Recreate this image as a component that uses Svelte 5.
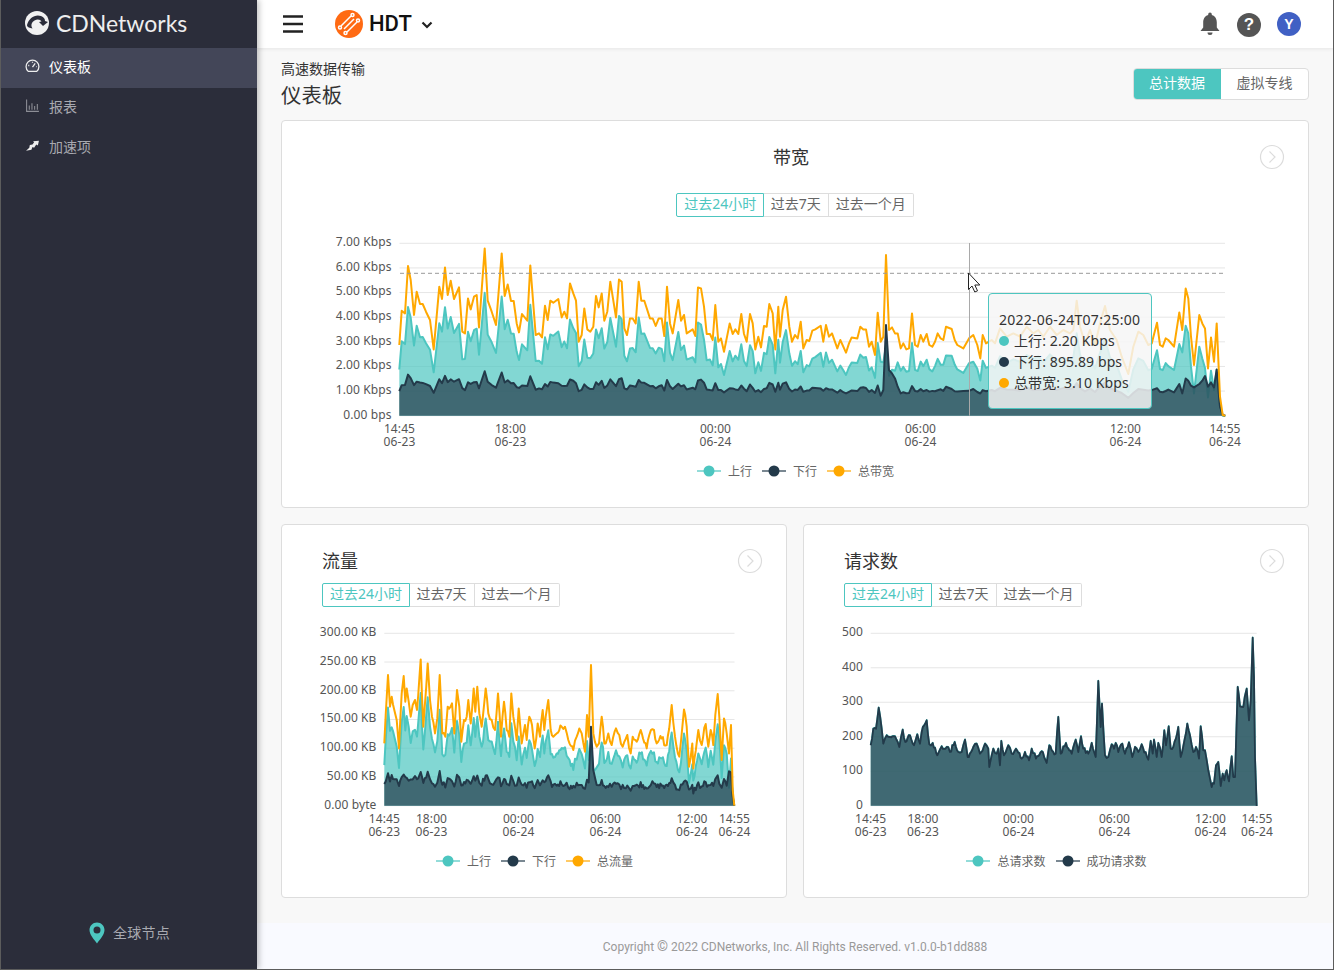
<script>
  let seed = 12345;
  const rnd = () => ((seed = (seed * 1103515245 + 12345) & 0x7fffffff) / 0x7fffffff);
  const pairs = (a) => { const o = []; for (let i = 0; i < a.length; i += 2) o.push([a[i], a[i + 1]]); return o; };
  const interp = (k, x) => {
    for (let i = 1; i < k.length; i++) if (x <= k[i][0]) {
      const t = (x - k[i - 1][0]) / (k[i][0] - k[i - 1][0]);
      return k[i - 1][1] + t * (k[i][1] - k[i - 1][1]);
    }
    return k[k.length - 1][1];
  };
  const inRange = (k, x) => k.length && x >= k[0][0] && x <= k[k.length - 1][0];
  const resample = (k, step, amp) => {
    const out = []; let last = k[0][0];
    k.forEach((p, i) => {
      if (i) {
        const n = Math.floor((p[0] - last) / step);
        for (let j = 1; j < n; j++) {
          const x = last + ((p[0] - last) * j) / n;
          out.push([x, interp(k, x) + (rnd() - 0.5) * amp]);
        }
      }
      out.push(p); last = p[0];
    });
    return out;
  };
  const d = (pts) => pts.map((p, i) => (i ? 'L' : 'M') + p[0].toFixed(1) + ' ' + p[1].toFixed(1)).join('');
  const area = (pts, base) => d(pts) + `L${pts[pts.length - 1][0].toFixed(1)} ${base}L${pts[0][0].toFixed(1)} ${base}Z`;

  const topA = pairs([208,345,215,242,225,250,234,108,242,150,252,255,260,185,270,222,278,222,288,245,300,270,311,358,328,170,336,207,345,112,353,195,362,152,372,207,387,172,397,305,405,310,414,205,422,238,432,200,440,195,447,292,464,55,473,212,485,245,498,285,515,70,524,198,533,163,543,213,551,213,560,280,567,307,576,252,592,272,601,106,617,315,627,310,636,322,645,227,653,270,661,212,670,218,685,207,695,262,703,245,711,265,720,160,730,190,738,212,746,335,755,315,763,235,772,298,781,305,790,290,798,198,806,232,815,190,823,272,832,245,841,155,858,262,867,148,875,155,883,295,891,315,900,265,908,265,917,280,926,155,934,212,943,212,960,265,968,265,977,288,986,265,995,265,1003,318,1011,170,1020,280,1028,310,1045,210,1053,272,1062,255,1070,310,1088,298,1096,318,1104,172,1113,175,1122,230,1130,312,1140,312,1148,330,1156,225,1165,335,1173,325,1182,365,1199,280,1208,312,1216,298,1225,312,1234,252,1242,312,1250,335,1260,252,1268,280,1276,358,1285,320,1293,352,1302,288,1310,290,1318,222,1328,250,1336,358,1345,230]);
  const topB = pairs([0,320,8,240,18,200,28,290,36,335,45,315,53,325,62,275,70,355,80,330,88,333,97,302,106,298,122,287,130,335,138,285,147,320,156,310,172,355,181,330,190,350,198,368,207,340,215,322,232,325,241,290,250,298,258,298,267,350,275,335,285,375,293,248,302,335,310,320,318,75,327,300,336,292,345,310,353,310,362,355,370,340,379,358,387,355,396,250,405,345,413,350,422,315,430,335,440,312,448,345,457,350,465,335,473,310,482,325,490,330,498,290,515,297,524,330,532,345,550,355,567,325,580,315,592,345,601,385,608,315,618,340,635,330,645,340,660,295,680,320,700,310,720,320,740,290,760,310,775,300,790,320,810,290,830,315,850,300,870,310,880,300,890,212,900,290,915,340,930,300,945,345,960,280,975,228,990,300,1010,330,1025,380,1045,432,1060,350,1075,305,1090,315,1105,345,1115,340,1131,278,1140,345,1148,350,1157,325,1165,330,1182,350,1198,247,1207,300,1217,175,1225,205,1233,320,1242,405,1258,255,1267,280,1275,295,1284,415,1293,322,1302,395,1310,280,1320,500,1328,555,1336,557]);
  const flowK = pairs([253,370,257,285,264,165,270,260,275,230,283,270,290,300,297,385,305,220,311,168,316,245,320,205,326,245,332,290,338,255,345,240,351,270,362,118,370,320,383,130,390,240,396,290,405,340,412,295,419,165,427,340,436,350,443,260,456,250,463,340,471,210,478,260,484,365,492,300,500,290,505,240,512,310,521,205,526,275,532,200,538,280,545,320,557,205,565,280,575,300,585,330,594,220,603,350,612,245,620,330,628,350,634,220,640,290,650,360,656,265,665,370,675,315,680,360,688,290,696,315,704,385,713,310,720,350,728,270,733,330,745,240,752,330,760,350,770,340,785,320,795,320,805,360,820,390,830,350,838,325,845,340,855,395,861,285,866,350,873,135,880,340,890,380,897,370,905,290,913,370,925,340,935,375,948,325,958,345,968,380,982,345,992,400,998,350,1010,365,1022,330,1040,385,1048,345,1062,330,1070,370,1085,355,1100,375,1115,255,1125,350,1138,410,1152,268,1160,320,1167,440,1177,370,1180,445,1195,330,1205,375,1217,312,1225,380,1232,330,1240,375,1246,285,1253,222,1258,290,1265,420,1272,295,1280,340,1287,400,1293,315,1298,510,1303,557]);
  const reqK = pairs([122,375,130,325,138,325,146,262,155,325,160,370,170,345,180,350,195,348,208,380,218,328,226,365,240,345,252,375,262,342,270,370,275,335,290,300,298,372,308,368,322,405,335,378,350,380,360,395,374,365,385,395,395,395,405,358,413,410,430,380,440,370,450,400,465,370,475,385,478,440,485,405,490,385,500,400,505,385,510,435,514,362,522,405,535,375,545,400,558,385,575,415,585,395,597,420,605,385,618,415,635,393,650,428,658,375,665,390,677,400,685,290,692,400,708,368,725,400,737,358,745,395,753,348,760,385,775,400,785,368,797,410,805,182,812,320,816,250,825,405,835,410,845,372,852,385,857,368,865,395,877,370,885,400,897,366,907,410,915,380,925,395,935,372,955,418,962,362,968,400,972,358,980,410,985,368,995,410,1003,330,1008,375,1016,318,1022,385,1030,380,1045,320,1052,410,1060,378,1072,310,1080,345,1090,395,1098,380,1107,415,1112,318,1120,390,1125,390,1135,450,1145,500,1152,490,1158,435,1165,425,1172,497,1178,460,1183,480,1190,450,1197,483,1205,408,1210,470,1215,470,1223,200,1230,258,1240,260,1244,230,1250,205,1257,300,1262,240,1268,52,1272,170,1275,410,1280,557]);

  const BASE = 557;
  const build = (keys, ox, realBase, a, b, amp, overrides = []) => {
    const total = [], up = [], down = [];
    keys.forEach(([zx, zy]) => {
      const x = ox + zx / 3;
      const h = Math.max(0, BASE - zy);
      let dn = a + b * h + (rnd() - 0.5) * amp;
      for (const ov of overrides) if (inRange(ov, zx)) dn = interp(ov, zx);
      if (h < 6) dn = Math.min(dn, h);
      const clampedDn = Math.min(dn, h);
      total.push([x, realBase - h / 3]);
      down.push([x, realBase - clampedDn / 3]);
      up.push([x, realBase - Math.max(0, h - clampedDn) / 3]);
    });
    return { total, up, down };
  };

  const tA = build(topA, 330, 415.7, 30, 0.2, 7);
  const tB = build(topB, 780, 415.7, 30, 0.2, 7, [
    [[302,60],[310,77],[318,272],[327,137],[336,127],[345,112],[353,87],[362,67]],
    [[1207,67],[1217,112],[1225,105],[1233,90],[1242,85],[1258,95],[1267,105],[1275,119],[1284,87],[1293,100],[1302,85],[1310,139],[1320,27],[1328,2],[1336,0]]
  ]);
  const topS = { total: [...tA.total, ...tB.total], up: [...tA.up, ...tB.up], down: [...tA.down, ...tB.down] };
  const flowS = build(resample(flowK, 3.6, 22), 300, 805.7, 20, 0.2, 16, [
    [[866,70],[871,200],[873,237],[876,150],[880,107],[888,70]],
    [[1286,100],[1292,120],[1296,40],[1303,0]]
  ]);
  const reqT = resample(reqK, 3.4, 14).map(([zx, zy]) => [830 + zx / 3, 805.7 - Math.max(0, BASE - zy) / 3]);
  const reqS = { total: reqT, up: reqT, down: reqT.map(([x, y]) => [x, y + 0.3]) };

  const TEAL = '#4dc6c0', DARK = '#233a4a', ORANGE = '#ffa800';
  const ticks = (t, b, n) => Array.from({ length: n + 1 }, (_, i) => t + ((b - t) * i) / n);

  const charts = {
    band: {
      vb: '282 225 1026 233', h: 233, x0: 399.5, x1: 1225, top: 243.3, base: 415.7, labelX: 391.5, ly: 429,
      y: ['7.00 Kbps','6.00 Kbps','5.00 Kbps','4.00 Kbps','3.00 Kbps','2.00 Kbps','1.00 Kbps','0.00 bps'],
      x: [[399.5,'14:45','06-23'],[510.5,'18:00','06-23'],[715.5,'00:00','06-24'],[920.5,'06:00','06-24'],[1125.5,'12:00','06-24'],[1225,'14:55','06-24']],
      s: topS, orange: true, sw: 2
    },
    flow: {
      vb: '282 615 504 234', h: 234, x0: 384.3, x1: 734.5, top: 633.3, base: 805.7, labelX: 376.5, ly: 819,
      y: ['300.00 KB','250.00 KB','200.00 KB','150.00 KB','100.00 KB','50.00 KB','0.00 byte'],
      x: [[384.3,'14:45','06-23'],[431.5,'18:00','06-23'],[518.5,'00:00','06-24'],[605.5,'06:00','06-24'],[692,'12:00','06-24'],[734.5,'14:55','06-24']],
      s: flowS, orange: true, sw: 2
    },
    req: {
      vb: '804 615 504 234', h: 234, x0: 870.7, x1: 1256.7, top: 633.3, base: 805.7, labelX: 863, ly: 819,
      y: ['500','400','300','200','100','0'],
      x: [[870.7,'14:45','06-23'],[923,'18:00','06-23'],[1018.5,'00:00','06-24'],[1114.5,'06:00','06-24'],[1210.5,'12:00','06-24'],[1257,'14:55','06-24']],
      s: reqS, orange: false, sw: 1.8
    }
  };
  const tabs = ['过去24小时', '过去7天', '过去一个月'];
  const legends = {
    band: [['上行', TEAL], ['下行', DARK], ['总带宽', ORANGE]],
    flow: [['上行', TEAL], ['下行', DARK], ['总流量', ORANGE]],
    req: [['总请求数', TEAL], ['成功请求数', DARK]]
  };
  const tipRows = [['上行: 2.20 Kbps', TEAL], ['下行: 895.89 bps', DARK], ['总带宽: 3.10 Kbps', ORANGE]];
</script>

{#snippet tabGroup()}
  <div class="tabs">
    {#each tabs as t, i}
      <span class="tab" class:on={i === 0}>{t}</span>
    {/each}
  </div>
{/snippet}

{#snippet more()}
  <svg class="more" width="26" height="26" viewBox="0 0 26 26">
    <circle cx="13" cy="13" r="11.5" fill="#fff" stroke="#dcdcdc" stroke-width="1.2" />
    <path d="M10.5 7.5 16 13l-5.5 5.5" fill="none" stroke="#dcdcdc" stroke-width="1.2" />
  </svg>
{/snippet}

{#snippet legend(items)}
  <div class="legend">
    {#each items as [name, c]}
      <span class="leg">
        <svg width="24" height="12" viewBox="0 0 24 12">
          <line x1="0" x2="24" y1="6" y2="6" stroke={c} stroke-width="2" opacity=".6" />
          <circle cx="12" cy="6" r="5.5" fill={c} />
        </svg>
        {name}
      </span>
    {/each}
  </div>
{/snippet}

{#snippet chart(c)}
  {@const n = c.y.length - 1}
  {@const ys = ticks(c.top, c.base, n)}
  <svg class="chart" height={c.h} viewBox={c.vb} preserveAspectRatio="xMinYMin meet">
    {#each ys as y, i}
      <line x1={c.x0} x2={c.x1} y1={y} y2={y} stroke="#e6e6e6" stroke-width="1" />
      <text x={c.labelX} y={y + 2.8} text-anchor="end" class="ax">{c.y[i]}</text>
    {/each}
    <path d={area(c.s.up, c.base)} fill={TEAL} fill-opacity=".7" />
    <path d={d(c.s.up)} fill="none" stroke={TEAL} stroke-width={c.sw} stroke-linejoin="round" />
    <path d={area(c.s.down, c.base)} fill={DARK} fill-opacity=".7" />
    <path d={d(c.s.down)} fill="none" stroke={DARK} stroke-width={c.sw} stroke-linejoin="round" />
    {#if c.orange}
      <path d={d(c.s.total)} fill="none" stroke={ORANGE} stroke-width={c.sw} stroke-linejoin="round" />
    {/if}
    {#each c.x as [x, a, b]}
      <text {x} y={c.ly + 4} text-anchor="middle" class="ax">{a}</text>
      <text {x} y={c.ly + 16.5} text-anchor="middle" class="ax">{b}</text>
    {/each}
  </svg>
{/snippet}

<div class="app">
  <aside class="side">
    <div class="logo">
      <svg width="26" height="26" viewBox="0 0 26 26">
        <circle cx="13" cy="13" r="12" fill="#f1f1f1" />
        <path d="M3 15C5 8 11 4 17 6c3 1 4 3 4 5l3 1-5 4-4-4 2.500-.5c-1-2-4-3-7-1-3 1.500-4 5-2 8-3-.5-5-1-5.500-3z" fill="#2b2d3a" />
      </svg>
      <span>CDNetworks</span>
    </div>
    <nav>
      <div class="item active">
        <svg width="15" height="15" viewBox="0 0 14 14" fill="none" stroke="#eee" stroke-width="1.2">
          <path d="M3 12.500a6 6 0 1 1 8 0z" />
          <path d="M7 8.500 9.500 5M3 7h1M10.500 8h.5M7 3.500v1" />
        </svg>
        <span>仪表板</span>
      </div>
      <div class="item">
        <svg width="15" height="15" viewBox="0 0 14 14" fill="none" stroke="#8d8e96" stroke-width="1">
          <path d="M1.500 1.500v11h11.500M4 11V7M6.500 11V5M9 11V7.500M11.500 11V5.500" />
        </svg>
        <span>报表</span>
      </div>
      <div class="item">
        <svg width="15" height="15" viewBox="0 0 14 14" fill="#eee">
          <path d="M13 2.500 12 7 10.500 6 8.500 9 7 8.500 6 11 1 12l3-3 .5-2.500L7 6l1.500-2L7.500 3z" />
        </svg>
        <span>加速项</span>
      </div>
    </nav>
    <div class="nodes">
      <svg width="16" height="22" viewBox="0 0 16 22">
        <path d="M8 0.500C3.800.5.500 3.800.5 8c0 5 5 10 7.500 13.500C10.500 18 15.500 13 15.500 8 15.500 3.800 12.200.5 8 .5z" fill="#4dc6c0" />
        <circle cx="8" cy="8" r="3.500" fill="#2b2d3a" />
      </svg>
      <span>全球节点</span>
    </div>
  </aside>

  <div class="main">
    <header class="bar">
      <svg class="burger" width="20" height="18" viewBox="0 0 20 18">
        <path d="M0 1.500h20M0 9h20M0 16.500h20" stroke="#222" stroke-width="2.500" />
      </svg>
      <svg class="hdt" width="28" height="28" viewBox="0 0 28 28">
        <circle cx="14" cy="14" r="14" fill="#ff6a13" />
        <g stroke="#fff" stroke-width="1.500" fill="none">
          <path d="M6 16 16 6M12 22 22 12M9 19l10-10" />
          <circle cx="17.500" cy="5" r="1.500" />
          <circle cx="23" cy="10.500" r="1.500" />
          <circle cx="5" cy="17.500" r="1.500" />
          <circle cx="10.500" cy="23" r="1.500" />
        </g>
      </svg>
      <span class="prod">HDT</span>
      <svg class="chev" width="12" height="8" viewBox="0 0 12 8">
        <path d="M1.500 1.500 6 6l4.500-4.500" fill="none" stroke="#222" stroke-width="2.200" />
      </svg>
      <div class="right">
        <svg width="20" height="24" viewBox="0 0 20 24">
          <path d="M10 0.500a1.800 1.800 0 0 1 1.800 1.800v.6c3.500 1 5 4 5 7.600v5l2.700 3.500H.5l2.700-3.500v-5c0-3.600 1.500-6.600 5-7.600v-.6A1.800 1.800 0 0 1 10 .5zM7.500 20.500h5a2.500 2.500 0 0 1-5 0z" fill="#555" />
        </svg>
        <span class="help">?</span>
        <span class="avatar">Y</span>
      </div>
    </header>

    <div class="content">
      <div class="head">
        <div>
          <div class="crumb">高速数据传输</div>
          <h1>仪表板</h1>
        </div>
        <div class="toggle">
          <span class="on">总计数据</span>
          <span>虚拟专线</span>
        </div>
      </div>

      <section class="card big">
        {@render more()}
        <div class="title center">带宽</div>
        <div class="tabwrap center">{@render tabGroup()}</div>
        <div class="plot">
          {@render chart(charts.band)}
          <svg class="overlay" width="1026" height="233" viewBox="282 225 1026 233">
            <line x1="969.5" x2="969.5" y1="243" y2="415.7" stroke="#a9a9a9" />
            <line x1="400" x2="1225" y1="273.300" y2="273.300" stroke="#999" stroke-dasharray="4 3" />
            <path d="M968.500 273v16.500l3.500-3.500 2.800 6 2.700-1.200-2.700-5.800h5z" fill="#fff" stroke="#222" stroke-width="1" />
          </svg>
          <div class="tip">
            <div>2022-06-24T07:25:00</div>
            {#each tipRows as [t, c]}
              <div class="tiprow"><i style:background={c}></i>{t}</div>
            {/each}
          </div>
        </div>
        {@render legend(legends.band)}
      </section>

      <div class="pair">
        <section class="card small">
          {@render more()}
          <div class="title">流量</div>
          <div class="tabwrap">{@render tabGroup()}</div>
          {@render chart(charts.flow)}
          {@render legend(legends.flow)}
        </section>
        <section class="card small">
          {@render more()}
          <div class="title">请求数</div>
          <div class="tabwrap">{@render tabGroup()}</div>
          {@render chart(charts.req)}
          {@render legend(legends.req)}
        </section>
      </div>
    </div>

    <footer>Copyright <span class="copy">©</span> 2022 CDNetworks, Inc. All Rights Reserved. v1.0.0-b1dd888</footer>
  </div>
</div>

<style>
  :global(body) { margin: 0; }
  .app {
    width: 1334px; height: 970px; box-sizing: border-box; display: flex; overflow: hidden;
    border: solid #5c5c5c; border-width: 0 1px 1px 1px; background: #f8f8f8;
    font-family: "Noto Sans", "Noto Sans CJK SC", sans-serif; color: #333;
  }
  .side {
    width: 256px; flex: none; background: #2b2d3a; color: #a8a9b0; display: flex; flex-direction: column;
    box-shadow: 2px 0 6px rgba(0, 0, 0, .25); z-index: 3; font-size: 14px;
  }
  .logo { height: 46px; padding-bottom: 2px; display: flex; align-items: center; gap: 6px; padding-left: 23px; }
  .logo span { font-family: Lato, sans-serif; font-size: 23px; color: #eee; }
  .item { height: 35px; padding-bottom: 5px; display: flex; align-items: center; gap: 9px; padding-left: 24px; }
  .item.active { background: #434658; color: #fff; }
  .nodes { margin-top: auto; height: 47px; display: flex; align-items: flex-start; justify-content: center; gap: 8px; padding-left: 1px; }
  .nodes span { line-height: 22px; letter-spacing: .2px; }

  .main { flex: 1; min-width: 0; display: flex; flex-direction: column; }
  .bar {
    height: 48px; flex: none; background: #fff; display: flex; align-items: center; padding-left: 26px;
    box-shadow: 0 1px 4px rgba(0, 0, 0, .08); z-index: 2;
  }
  .bar > svg, .prod { margin-bottom: 1px; }
  .hdt { margin-left: 32px; }
  .prod { margin-left: 6px; font-family: Roboto, sans-serif; font-weight: 500; font-size: 22px; color: #111; }
  .chev { margin: 2px 0 0 9px; }
  .right { margin-left: auto; margin-right: 32px; display: flex; align-items: center; gap: 16px; }
  .right svg { margin-right: 1px; }
  .help, .avatar {
    width: 24px; height: 24px; border-radius: 50%; color: #fff; display: flex; align-items: center; justify-content: center;
    font-family: "Liberation Sans", sans-serif; font-weight: 700;
  }
  .help { background: #555; font-size: 17px; margin-top: 1px; }
  .avatar { background: #4060c4; font-size: 14px; }

  .content { flex: 1; padding: 0 24px; background: #f8f8f8; }
  .head { display: flex; justify-content: space-between; align-items: flex-start; height: 72px; padding-top: 11px; box-sizing: border-box; }
  .crumb { font-size: 14px; line-height: 20px; color: #333; }
  h1 { margin: 1px 0 0; font-size: 20.4px; line-height: 30px; font-weight: 400; color: #333; }
  .toggle { margin-top: 9px; display: flex; height: 32px; box-sizing: border-box; border-radius: 4px; border: 1px solid #ddd; background: #fff; overflow: hidden; font-size: 14px; line-height: 28px; color: #666; }
  .toggle span { width: 87px; text-align: center; }
  .toggle .on { background: #4dc6c0; color: #fff; width: 88px; margin: -1px 0 -1px -1px; line-height: 30px; }

  .card { position: relative; background: #fff; border: 1px solid #ddd; border-radius: 4px; box-sizing: border-box; padding-top: 24px; }
  .big { height: 388px; }
  .small { height: 374px; }
  .pair { display: grid; grid-template-columns: 1fr 1fr; gap: 16px; margin-top: 16px; }
  .more { position: absolute; top: 23px; right: 23px; }
  .title { font-size: 18px; line-height: 24px; color: #333; padding-left: 40px; }
  .title.center { padding: 0 8px 0 0; text-align: center; }
  .tabwrap { display: flex; padding-left: 40px; margin-top: 10px; }
  .tabwrap.center { justify-content: center; padding: 0; margin-top: 24px; }
  .tabs { display: flex; height: 24px; font-size: 14px; line-height: 20px; color: #666; }
  .tab { border: 1px solid #ddd; border-left-width: 0; padding: 0 7px; }
  .tab:first-child { border-left-width: 1px; border-radius: 2px 0 0 2px; }
  .tab:last-child { border-radius: 0 2px 2px 0; padding-right: 7px; }
  .tab.on { border-color: #4dc6c0; color: #4dc6c0; padding: 0 6.500px 0 7px; }
  .plot { position: relative; margin-top: 8px; height: 233px; }
  .overlay { position: absolute; left: 0; top: 0; pointer-events: none; }
  .chart { display: block; width: 100%; margin-top: 8px; }
  .plot .chart { margin-top: 0; }
  .ax { font-size: 12px; fill: #555; font-family: "Noto Sans", sans-serif; letter-spacing: .1px; }
  .legend { display: flex; justify-content: center; gap: 10px; height: 24px; align-items: center; font-size: 12px; color: #666; padding-left: 1px; }
  .big .legend { margin-top: 1px; padding-left: 1px; }
  .leg { display: flex; align-items: center; gap: 7px; }
  .tip {
    position: absolute; left: 706px; top: 68px; width: 164px; height: 116px; box-sizing: border-box; padding: 15px 10px 0;
    background: rgba(245, 245, 245, .84); border: 1px solid #4dc6c0; border-radius: 4px; font-size: 14px; line-height: 21px; color: #333; white-space: nowrap; letter-spacing: .25px;
  }
  .tiprow { display: flex; align-items: center; gap: 5px; letter-spacing: .1px; }
  .tiprow i { width: 10px; height: 10px; border-radius: 50%; }
  footer { height: 46px; flex: none; background: #f9faff; text-align: center; font-family: Roboto, sans-serif; font-size: 12px; line-height: 48px; color: #999; }
  .copy { font-size: 14px; line-height: 1; }
</style>
